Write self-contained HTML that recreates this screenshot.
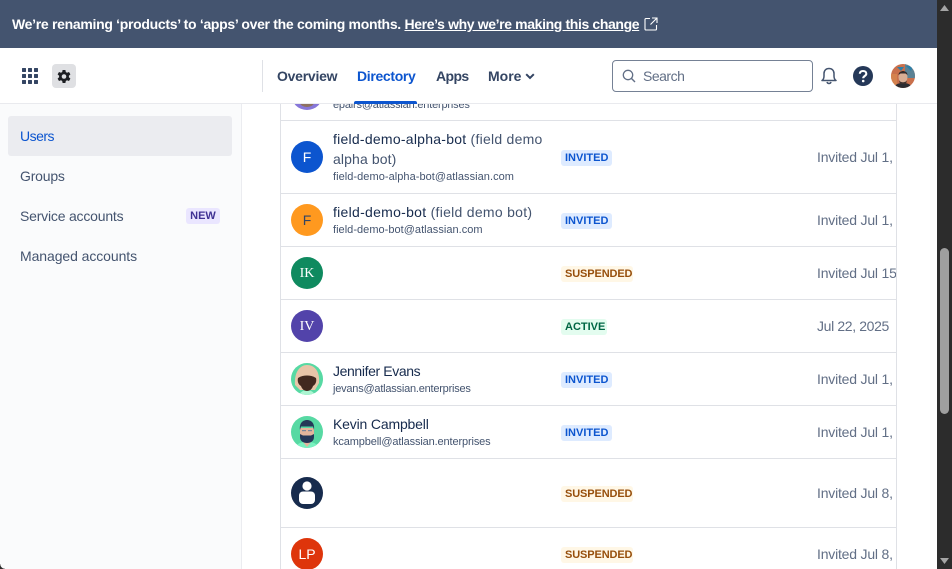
<!DOCTYPE html>
<html><head><meta charset="utf-8"><style>
html,body{margin:0;padding:0;width:952px;height:569px;overflow:hidden;background:#fff}
body{position:relative;font-family:"Liberation Sans",sans-serif;font-size:14px;color:#172B4D}
.a{position:absolute;white-space:nowrap}
.ln{position:absolute;left:281px;width:615px;height:1px;background:#DFE1E6}
.t{position:absolute;white-space:nowrap;line-height:20px;height:20px}
.e{position:absolute;white-space:nowrap;font-size:11px;line-height:14px;color:#44546F;left:333px}
.n{left:333px;color:#172B4D}
.n i{font-style:normal;color:#44546F}
.d{position:absolute;left:817px;width:79px;overflow:hidden;white-space:nowrap;line-height:20px;color:#626F86;letter-spacing:-.2px}
.b{position:absolute;left:561px;height:16px;line-height:17px;border-radius:3px;font-size:11px;font-weight:700;padding:0 4px;box-sizing:border-box;white-space:nowrap}
.inv{background:#DEEBFF;color:#0C55CF;width:51px}
.sus{background:#FFF7E6;color:#974F0C;width:72px;letter-spacing:-.12px}
.act{background:#E3FCEF;color:#006644;width:46px}
.av{position:absolute;left:291px;width:32px;height:32px;border-radius:50%;color:#fff;text-align:center;line-height:32px;font-size:14px;overflow:hidden}
.nav{position:absolute;top:66px;line-height:20px;font-weight:700;color:#344563;white-space:nowrap}
.s{position:absolute;left:20px;line-height:20px;color:#44546F;white-space:nowrap}
</style></head><body>

<!-- content rows -->
<div class="a" style="left:291px;top:78px;width:32px;height:32px;border-radius:50%;background:#8777D9;overflow:hidden"><div style="position:absolute;left:9px;top:20px;width:14px;height:9px;background:#8E7160;border-radius:50%"></div></div>
<div class="e" style="top:98px;letter-spacing:-.19px">epairs@atlassian.enterprises</div>

<div class="a" style="left:280px;top:104px;width:1px;height:465px;background:#DFE1E6"></div>
<div class="a" style="left:896px;top:104px;width:1px;height:465px;background:#DFE1E6"></div>
<div class="ln" style="top:120px"></div>
<div class="ln" style="top:193px"></div>
<div class="ln" style="top:246px"></div>
<div class="ln" style="top:299px"></div>
<div class="ln" style="top:352px"></div>
<div class="ln" style="top:405px"></div>
<div class="ln" style="top:458px"></div>
<div class="ln" style="top:527px"></div>

<!-- row 1 -->
<div class="av" style="top:141px;background:#0C55CF">F</div>
<div class="t n" style="top:129px;letter-spacing:.25px">field-demo-alpha-bot <i>(field demo</i></div>
<div class="t n" style="top:149px;letter-spacing:.12px"><i>alpha bot)</i></div>
<div class="e" style="top:170px;letter-spacing:.05px">field-demo-alpha-bot@atlassian.com</div>
<div class="b inv" style="top:150px">INVITED</div>
<div class="d" style="top:147px">Invited Jul 1, 2025</div>

<!-- row 2 -->
<div class="av" style="top:204px;background:#FF991F;color:#344563">F</div>
<div class="t n" style="top:202px;letter-spacing:.28px">field-demo-bot <i>(field demo bot)</i></div>
<div class="e" style="top:223px;letter-spacing:.03px">field-demo-bot@atlassian.com</div>
<div class="b inv" style="top:213px">INVITED</div>
<div class="d" style="top:210px">Invited Jul 1, 2025</div>

<!-- row 3 -->
<div class="av" style="top:257px;background:#0F8A5F;font-family:'Liberation Serif',serif;font-size:14px;line-height:34px">IK</div>
<div class="b sus" style="top:266px">SUSPENDED</div>
<div class="d" style="top:263px">Invited Jul 15, 2025</div>

<!-- row 4 -->
<div class="av" style="top:310px;background:#5243AA;font-family:'Liberation Serif',serif;font-size:14px;line-height:34px">IV</div>
<div class="b act" style="top:319px">ACTIVE</div>
<div class="d" style="top:316px;letter-spacing:-.36px">Jul 22, 2025</div>

<!-- row 5 -->
<svg class="a" style="left:291px;top:363px" width="32" height="32" viewBox="0 0 32 32"><defs><clipPath id="c1"><circle cx="16" cy="16" r="16"/></clipPath></defs><g clip-path="url(#c1)"><rect width="32" height="32" fill="#57D9A3"/><path d="M4 22C3 9 9 2 16 2c8 0 13 7 12 18l-4 7H9z" fill="#E8C4A8"/><path d="M8 32c1-3 5-5 8-5s7 2 8 5z" fill="#ABF5D1"/><path d="M7 15c3-2 6-2.500 9-2.500s6 .5 9 2.500c1 4-1 7-3 8-1 3-3 5-6 5s-5-2-6-5c-2-1-4-4-3-8z" fill="#42281F"/></g></svg>
<div class="t n" style="top:361px;letter-spacing:-.38px">Jennifer Evans</div>
<div class="e" style="top:382px;letter-spacing:-.22px">jevans@atlassian.enterprises</div>
<div class="b inv" style="top:372px">INVITED</div>
<div class="d" style="top:369px">Invited Jul 1, 2025</div>

<!-- row 6 -->
<svg class="a" style="left:291px;top:416px" width="32" height="32" viewBox="0 0 32 32"><defs><clipPath id="c2"><circle cx="16" cy="16" r="16"/></clipPath></defs><g clip-path="url(#c2)"><rect width="32" height="32" fill="#57D9A3"/><path d="M5 32c1-5 5-6 11-6s10 1 11 6z" fill="#79F2C0"/><path d="M16 31l-4-5h8z" fill="#E3B59C"/><path d="M9 12h14v8c0 4-3 6-7 6s-7-2-7-6z" fill="#E3B59C"/><path d="M9 14c-1-7 3-10 7-10s8 3 7 10l-1-3.500H10z" fill="#253858"/><path d="M9 18l3 1.500h8l3-1.500v3c0 4-3 6-7 6s-7-2-7-6z" fill="#253858"/><rect x="11" y="14" width="4" height="1.200" fill="#7A869A"/><rect x="17" y="14" width="4" height="1.200" fill="#7A869A"/></g></svg>
<div class="t n" style="top:414px;letter-spacing:-.17px">Kevin Campbell</div>
<div class="e" style="top:435px;letter-spacing:-.13px">kcampbell@atlassian.enterprises</div>
<div class="b inv" style="top:425px">INVITED</div>
<div class="d" style="top:422px">Invited Jul 1, 2025</div>

<!-- row 7 -->
<svg class="a" style="left:291px;top:477px" width="32" height="32" viewBox="0 0 32 32"><circle cx="16" cy="16" r="16" fill="#172B4D"/><circle cx="16" cy="9" r="4.600" fill="#fff"/><rect x="8" y="14.500" width="16" height="12.500" rx="4" fill="#fff"/></svg>
<div class="b sus" style="top:486px">SUSPENDED</div>
<div class="d" style="top:483px">Invited Jul 8, 2025</div>

<!-- row 8 -->
<div class="av" style="top:538px;background:#DE350B;font-weight:400">LP</div>
<div class="b sus" style="top:547px">SUSPENDED</div>
<div class="d" style="top:544px">Invited Jul 8, 2025</div>

<!-- sidebar -->
<div class="a" style="left:0;top:104px;width:241px;height:465px;background:#FAFBFC"></div>
<div class="a" style="left:241px;top:104px;width:1px;height:465px;background:#EBECF0"></div>
<div class="a" style="left:8px;top:116px;width:224px;height:40px;background:#EBECF0;border-radius:3px"></div>
<div class="s" style="top:126px;color:#0C55CF;letter-spacing:-.5px">Users</div>
<div class="s" style="top:166px;letter-spacing:-.2px">Groups</div>
<div class="s" style="top:206px;letter-spacing:-.2px">Service accounts</div>
<div class="a" style="left:186px;top:208px;width:34px;height:16px;background:#EAE6FF;border-radius:3px;color:#403294;font-size:11px;font-weight:700;line-height:16px;text-align:center">NEW</div>
<div class="s" style="top:246px;letter-spacing:-.08px">Managed accounts</div>

<!-- header -->
<div class="a" style="left:0;top:48px;width:937px;height:55px;background:#fff"></div>
<div class="a" style="left:0;top:103px;width:937px;height:1px;background:#E9EAEE"></div>
<svg class="a" style="left:22px;top:68px" width="16" height="16" viewBox="0 0 16 16" fill="#344563"><rect x="0" y="0" width="4" height="4" rx=".6"/><rect x="6" y="0" width="4" height="4" rx=".6"/><rect x="12" y="0" width="4" height="4" rx=".6"/><rect x="0" y="6" width="4" height="4" rx=".6"/><rect x="6" y="6" width="4" height="4" rx=".6"/><rect x="12" y="6" width="4" height="4" rx=".6"/><rect x="0" y="12" width="4" height="4" rx=".6"/><rect x="6" y="12" width="4" height="4" rx=".6"/><rect x="12" y="12" width="4" height="4" rx=".6"/></svg>
<div class="a" style="left:52px;top:64px;width:24px;height:24px;background:#DFE0E3;border-radius:4px"></div>
<svg class="a" style="left:57px;top:70px" width="14" height="14" viewBox="0 0 14 14"><path d="M5.600 0h2.800l.4 2 1.200.7 2-.7 1.400 2.400-1.500 1.400v1.400l1.500 1.400L12 11l-2-.7-1.200.7-.4 2H5.600l-.4-2-1.200-.7-2 .7L.6 8.600l1.500-1.400V5.800L.6 4.400 2 2l2 .7 1.200-.7z" fill="#1D1F23"/><circle cx="7" cy="6.500" r="2.300" fill="#DFE0E3"/></svg>
<div class="a" style="left:262px;top:60px;width:1px;height:32px;background:#DFE1E6"></div>
<div class="nav" style="left:277px;letter-spacing:-.25px">Overview</div>
<div class="nav" style="left:357px;color:#0C55CF;letter-spacing:-.33px">Directory</div>
<div class="a" style="left:354px;top:101px;width:63px;height:3px;background:#0C55CF;border-radius:2px 2px 0 0"></div>
<div class="nav" style="left:436px;letter-spacing:-.6px">Apps</div>
<div class="nav" style="left:488px">More</div>
<svg class="a" style="left:525px;top:73px" width="10" height="7" viewBox="0 0 10 7"><path d="M1.200 1.200L5 5l3.800-3.800" fill="none" stroke="#344563" stroke-width="2"/></svg>

<div class="a" style="left:612px;top:60px;width:201px;height:32px;box-sizing:border-box;border:1px solid #758195;border-radius:4px;background:#fff"></div>
<svg class="a" style="left:622px;top:69px" width="14" height="14" viewBox="0 0 14 14"><circle cx="6" cy="6" r="4.700" fill="none" stroke="#626F86" stroke-width="1.300"/><path d="M9.500 9.500L13 13" stroke="#626F86" stroke-width="1.400"/></svg>
<div class="a" style="left:643px;top:66px;line-height:20px;color:#626F86;letter-spacing:-.5px">Search</div>
<svg class="a" style="left:821px;top:67px" width="16" height="18" viewBox="0 0 16 18"><path d="M1 13.500c1.500-1 2-2.500 2-4.500V6.500C3 3.500 5 1.500 8 1.500s5 2 5 5V9c0 2 .5 3.500 2 4.500z" fill="none" stroke="#44546F" stroke-width="1.500" stroke-linejoin="round"/><path d="M6 15c.3 1 1 1.500 2 1.500s1.700-.5 2-1.500" fill="none" stroke="#44546F" stroke-width="1.500"/></svg>
<svg class="a" style="left:853px;top:66px" width="20" height="20" viewBox="0 0 20 20"><circle cx="10" cy="10" r="10" fill="#253858"/><path d="M6.800 7.800C6.800 5.900 8.200 5 10 5c1.900 0 3.300 1 3.300 2.700 0 2.300-3.100 2.300-3.100 4.500" fill="none" stroke="#fff" stroke-width="2.100"/><circle cx="10.200" cy="15" r="1.300" fill="#fff"/></svg>
<svg class="a" style="left:891px;top:64px" width="24" height="24" viewBox="0 0 24 24"><defs><clipPath id="c3"><circle cx="12" cy="12" r="12"/></clipPath></defs><g clip-path="url(#c3)"><rect width="24" height="24" fill="#C9704C"/><rect x="14" y="0" width="10" height="14" fill="#5B8294"/><path d="M6 3h7l-3 4zM15 2h7l-2 5z" fill="#2E7FA8"/><rect x="0" y="10" width="6" height="14" fill="#D4824E"/><path d="M3 24c1-4 5-5 9-5s8 1 9 5z" fill="#2B2B30"/><ellipse cx="12" cy="13" rx="4.500" ry="6" fill="#D8AD94"/><path d="M7.500 11c0-3 3-4 4.500-4s4.500 1 4.500 4l-2-1.500h-5z" fill="#33292A"/><path d="M8 16c1 3 7 3 8 0l-1 4H9z" fill="#3D302D"/></g></svg>

<!-- banner -->
<div class="a" style="left:0;top:0;width:937px;height:48px;background:#44546F"></div>
<div class="a" style="left:12px;top:14px;line-height:20px;color:#fff;font-weight:700;letter-spacing:-.3px">We’re renaming ‘products’ to ‘apps’ over the coming months. <span style="text-decoration:underline;letter-spacing:-.37px">Here’s why we’re making this change</span></div>
<svg class="a" style="left:644px;top:17px" width="14" height="14" viewBox="0 0 14 14" fill="none" stroke="#fff" stroke-width="1.100"><path d="M6 1.500H2a1 1 0 0 0-1 1V12a1 1 0 0 0 1 1h9.500a1 1 0 0 0 1-1V8"/><path d="M8 1h5v5M13 1L6.500 7.500"/></svg>

<!-- scrollbar -->
<div class="a" style="left:937px;top:0;width:15px;height:569px;background:#2C2C2C"></div>
<div class="a" style="left:940px;top:248px;width:9px;height:166px;background:#9F9F9F;border-radius:5px"></div>
<svg class="a" style="left:940px;top:5px" width="9" height="7"><path d="M4.500 0L9 6H0z" fill="#A5A5A5"/></svg>
<svg class="a" style="left:940px;top:558px" width="9" height="7"><path d="M4.500 6L9 0H0z" fill="#A5A5A5"/></svg>
<div class="a" style="left:0;top:564px;width:5px;height:5px;background:radial-gradient(circle at 100% 0,transparent 4.500px,#2C2C2C 5px)"></div>
</body></html>
